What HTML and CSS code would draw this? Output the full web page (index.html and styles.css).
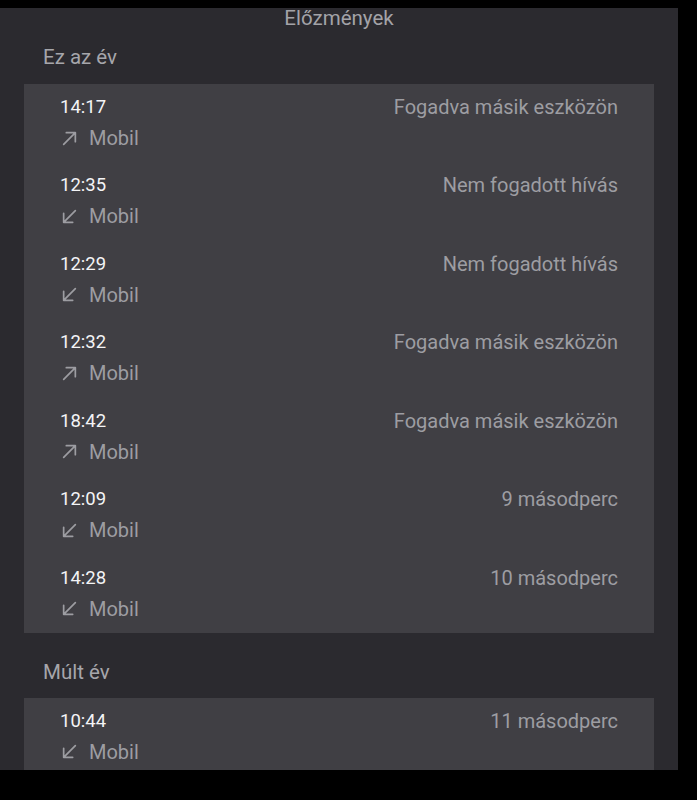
FILE: index.html
```html
<!DOCTYPE html>
<html lang="hu">
<head>
<meta charset="utf-8">
<title>Előzmények</title>
<link rel="stylesheet" href="styles.css">
</head>
<body>
<div class="panel">
  <div class="title">Előzmények</div>

  <div class="section-title first">Ez az év</div>
  <div class="card">
    <div class="row">
      <div class="time">14:17</div>
      <div class="status">Fogadva másik eszközön</div>
      <div class="kind"><svg class="arrow" viewBox="0 0 16 16"><path d="M2.5 13.5 L13.5 2.5 M5 2.5 H13.5 V11"/></svg>Mobil</div>
    </div>
    <div class="row">
      <div class="time">12:35</div>
      <div class="status">Nem fogadott hívás</div>
      <div class="kind"><svg class="arrow" viewBox="0 0 16 16"><path d="M13.5 2.5 L2.5 13.5 M2.5 5 V13.5 H11"/></svg>Mobil</div>
    </div>
    <div class="row">
      <div class="time">12:29</div>
      <div class="status">Nem fogadott hívás</div>
      <div class="kind"><svg class="arrow" viewBox="0 0 16 16"><path d="M13.5 2.5 L2.5 13.5 M2.5 5 V13.5 H11"/></svg>Mobil</div>
    </div>
    <div class="row">
      <div class="time">12:32</div>
      <div class="status">Fogadva másik eszközön</div>
      <div class="kind"><svg class="arrow" viewBox="0 0 16 16"><path d="M2.5 13.5 L13.5 2.5 M5 2.5 H13.5 V11"/></svg>Mobil</div>
    </div>
    <div class="row">
      <div class="time">18:42</div>
      <div class="status">Fogadva másik eszközön</div>
      <div class="kind"><svg class="arrow" viewBox="0 0 16 16"><path d="M2.5 13.5 L13.5 2.5 M5 2.5 H13.5 V11"/></svg>Mobil</div>
    </div>
    <div class="row">
      <div class="time">12:09</div>
      <div class="status">9 másodperc</div>
      <div class="kind"><svg class="arrow" viewBox="0 0 16 16"><path d="M13.5 2.5 L2.5 13.5 M2.5 5 V13.5 H11"/></svg>Mobil</div>
    </div>
    <div class="row">
      <div class="time">14:28</div>
      <div class="status">10 másodperc</div>
      <div class="kind"><svg class="arrow" viewBox="0 0 16 16"><path d="M13.5 2.5 L2.5 13.5 M2.5 5 V13.5 H11"/></svg>Mobil</div>
    </div>
  </div>

  <div class="section-title second">Múlt év</div>
  <div class="card last">
    <div class="row">
      <div class="time">10:44</div>
      <div class="status">11 másodperc</div>
      <div class="kind"><svg class="arrow" viewBox="0 0 16 16"><path d="M13.5 2.5 L2.5 13.5 M2.5 5 V13.5 H11"/></svg>Mobil</div>
    </div>
  </div>
</div>
</body>
</html>
```

FILE: styles.css
```css
html, body {
  margin: 0;
  padding: 0;
  background: #000;
}

body {
  font-family: Roboto, "Liberation Sans", sans-serif;
  -webkit-font-smoothing: antialiased;
}

.panel {
  margin-top: 8px;
  width: 678px;
  height: 762px;
  background: #2b2a2f;
  display: flex;
  flex-direction: column;
}

.title {
  text-align: center;
  font-size: 20.5px;
  line-height: 20px;
  height: 20px;
  color: #a3a3a8;
}

.section-title {
  font-size: 20.5px;
  line-height: 20px;
  color: #a6a6ab;
  padding-left: 43px;
}

.section-title.first {
  margin-top: 19px;
  margin-bottom: 17px;
}

.section-title.second {
  margin-top: 29px;
  margin-bottom: 16px;
}

.card {
  margin: 0 24px;
  background: rgba(255, 255, 255, 0.1);
  padding: 0 36px;
  flex: none;
}

.card.last {
  height: 82px;
}

.row {
  display: grid;
  grid-template-columns: auto 1fr;
  grid-template-rows: 20px 20px;
  row-gap: 11px;
  padding-top: 13px;
  padding-bottom: 14.43px;
  font-size: 20px;
  line-height: 20px;
}

.time {
  color: #f4f4f6;
  font-size: 18.5px;
}

.status {
  color: #9d9da2;
  text-align: right;
}

.kind {
  grid-column: 1 / 3;
  display: flex;
  align-items: center;
  color: #9d9da2;
}

.arrow {
  width: 17px;
  height: 17px;
  margin-left: 1px;
  margin-right: 11px;
  fill: none;
  stroke: #9d9da2;
  stroke-width: 1.6;
  stroke-linecap: round;
  stroke-linejoin: round;
}
```
